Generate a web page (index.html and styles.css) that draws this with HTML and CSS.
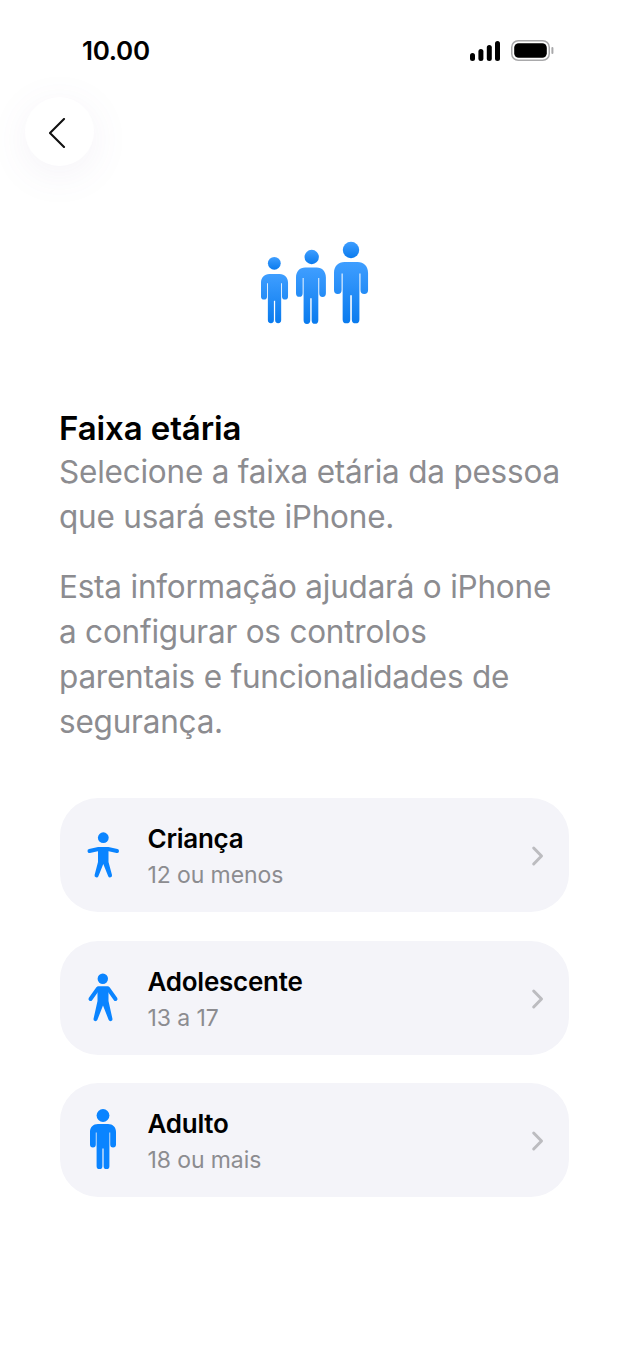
FILE: index.html
```html
<!DOCTYPE html>
<html lang="pt">
<head>
<meta charset="utf-8">
<title>Faixa etária</title>
<link rel="stylesheet" href="styles.css">
</head>
<body>
<svg class="defs" width="0" height="0" aria-hidden="true">
  <defs>
    <linearGradient id="blue" x1="0" y1="0" x2="0" y2="1">
      <stop offset="0" stop-color="#3f9eff"/>
      <stop offset="1" stop-color="#0a7bee"/>
    </linearGradient>
    <path id="body" d="M8 0H18C22.8 0 26 3.2 26 8V20.6a2.9 2.9 0 0 1-5.8 0V8.4H19.4V42.2a2.9 2.9 0 0 1-5.8 0V24.5H12.4V42.2a2.9 2.9 0 0 1-5.8 0V8.4H5.8V20.6a2.9 2.9 0 0 1-5.8 0V8C0 3.2 3.2 0 8 0Z"/>
  </defs>
</svg>
<main class="screen">
  <header class="status">
    <span class="time">10.00</span>
    <span class="status-icons">
      <svg class="signal" width="30" height="20" viewBox="0 0 30 20"><rect x="0" y="12" width="5" height="8" rx="2.5"/><rect x="8.4" y="8" width="5" height="12" rx="2.5"/><rect x="16.8" y="4" width="5" height="16" rx="2.5"/><rect x="25" y="0" width="5" height="20" rx="2.5"/></svg>
      <svg class="battery" width="43" height="21" viewBox="0 0 43 21"><rect x=".75" y=".75" width="37.5" height="19.5" rx="6.5" fill="none" stroke="#a9a9ab" stroke-width="1.5"/><rect x="3.2" y="3.2" width="32.6" height="14.6" rx="4.5" fill="#000"/><rect x="40.4" y="7" width="2" height="7" rx="1" fill="#a9a9ab"/></svg>
    </span>
  </header>

  <button class="back" aria-label="Voltar">
    <svg width="18" height="30" viewBox="0 0 18 30"><path d="M15 1 1 15l14 14" fill="none" stroke="#111" stroke-width="2.1" stroke-linecap="round" stroke-linejoin="round"/></svg>
  </button>

  <div class="hero">
    <svg width="108" height="84" viewBox="0 0 108 84">
      <g fill="url(#blue)">
        <circle cx="13.3" cy="23.3" r="6.4"/>
        <use href="#body" transform="translate(0 34) scale(1.04 1.09)"/>
        <circle cx="50.7" cy="17" r="7.2"/>
        <use href="#body" transform="translate(35 27.5) scale(1.15 1.25)"/>
        <circle cx="90" cy="10" r="8.2"/>
        <use href="#body" transform="translate(73 22) scale(1.31 1.36)"/>
      </g>
    </svg>
  </div>

  <section class="intro">
    <h1>Faixa etária</h1>
    <p>Selecione a faixa etária da pessoa que usará este iPhone.</p>
    <p>Esta informação ajudará o iPhone a configurar os controlos parentais e funcionalidades de segurança.</p>
  </section>

  <ul class="options">
    <li class="option">
      <svg class="person" width="34" height="50" viewBox="0 0 34 50">
        <circle cx="17.3" cy="7.7" r="5.4" fill="#0a84ff"/>
        <path d="M3.5 21 12.5 19h9.5l9 2" fill="none" stroke="#0a84ff" stroke-width="4" stroke-linecap="round" stroke-linejoin="round"/>
        <path d="M12 18h10.5V32L26 45a2 2 0 0 1-3.8 1.2L17.3 34l-4.9 12.2A2 2 0 0 1 8.6 45L12 32Z" fill="#0a84ff"/>
      </svg>
      <div class="labels"><strong>Criança</strong><span>12 ou menos</span></div>
      <svg class="chev" width="14" height="24" viewBox="0 0 14 24"><path d="M2.7 4 10.5 12l-7.8 8" fill="none" stroke="#bcbcc0" stroke-width="3" stroke-linecap="round" stroke-linejoin="round"/></svg>
    </li>
    <li class="option">
      <svg class="person" width="34" height="50" viewBox="0 0 34 50">
        <circle cx="16.8" cy="5.7" r="5.2" fill="#0a84ff"/>
        <path d="M4.5 26 12 15.5h10L29.5 26" fill="none" stroke="#0a84ff" stroke-width="4" stroke-linecap="round" stroke-linejoin="round"/>
        <path d="M11.5 13.5h11V28L26.5 46a2 2 0 0 1-3.8 1L17 32.5 11.3 47a2 2 0 0 1-3.8-1L11.5 28Z" fill="#0a84ff"/>
      </svg>
      <div class="labels"><strong>Adolescente</strong><span>13 a 17</span></div>
      <svg class="chev" width="14" height="24" viewBox="0 0 14 24"><path d="M2.7 4 10.5 12l-7.8 8" fill="none" stroke="#bcbcc0" stroke-width="3" stroke-linecap="round" stroke-linejoin="round"/></svg>
    </li>
    <li class="option">
      <svg class="person" width="34" height="62" viewBox="0 0 34 62">
        <circle cx="17" cy="6.5" r="6.4" fill="#0a84ff"/>
        <use href="#body" x="4" y="15" fill="#0a84ff"/>
      </svg>
      <div class="labels"><strong>Adulto</strong><span>18 ou mais</span></div>
      <svg class="chev" width="14" height="24" viewBox="0 0 14 24"><path d="M2.7 4 10.5 12l-7.8 8" fill="none" stroke="#bcbcc0" stroke-width="3" stroke-linecap="round" stroke-linejoin="round"/></svg>
    </li>
  </ul>
</main>
</body>
</html>
```
FILE: styles.css
```css
* { box-sizing: border-box; }
html, body { margin: 0; padding: 0; background: #fff; }
body { font-family: Inter, "Liberation Sans", sans-serif; color: #000; }
.defs { display: block; height: 0; }
.screen { width: 629px; height: 1368px; overflow: hidden; display: flex; flex-direction: column; }

.status { display: flex; justify-content: space-between; align-items: center; height: 21px; margin-top: 40px; padding: 0 75px 0 82px; }
.time { font-size: 26px; font-weight: 600; line-height: 21px; letter-spacing: -0.3px; }
.status-icons { display: flex; align-items: center; gap: 11.5px; }
.signal, .battery { display: block; }
.signal { fill: #000; }

.back { width: 69px; height: 69px; margin: 36px 0 0 25px; padding: 2px 4px 0 0; border: 0; border-radius: 50%; background: #fff; box-shadow: 0 8px 40px rgba(120, 90, 150, 0.08); display: flex; align-items: center; justify-content: center; }
.back svg { display: block; }

.hero { display: flex; margin: 74px 0 0 261px; }
.hero svg { display: block; }

.intro { margin: 82.5px 65px 0 59px; }
.intro h1 { margin: 0; font-size: 33px; line-height: 43.5px; font-weight: 600; letter-spacing: -0.1px; }
.intro p { margin: 0 0 26px; font-size: 31.5px; line-height: 44.7px; color: #8c8c90; letter-spacing: -0.22px; }

.options { list-style: none; margin: 28px 60px 0; padding: 0; display: flex; flex-direction: column; gap: 28.5px; }
.option { height: 114px; border-radius: 38px; background: #f4f4f9; display: flex; align-items: center; padding: 0 24px 0 26px; }
.person { display: block; flex: none; }
.labels { flex: 1; display: flex; flex-direction: column; gap: 7px; margin-left: 27.5px; padding-top: 3px; }
.labels strong { font-size: 26px; line-height: 30px; font-weight: 600; letter-spacing: -0.25px; }
.labels span { font-size: 23px; line-height: 28px; color: #8c8c90; letter-spacing: -0.1px; }
.chev { display: block; flex: none; margin-top: 2px; }
```
